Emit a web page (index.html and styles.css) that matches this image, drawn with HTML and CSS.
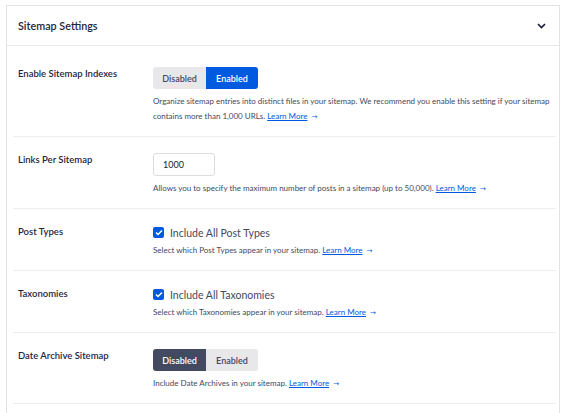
FILE: index.html
```html
<!DOCTYPE html>
<html lang="en">
<head>
    <meta charset="UTF-8">
    <title>Sitemap Settings</title>
    <link rel="stylesheet" href="styles.css">
</head>
<body>
    <div class="card">
        <div class="card-header">
            <h2>Sitemap Settings</h2>
            <svg class="chevron" width="9" height="6" viewBox="0 0 9 6"><path d="M1 1l3.5 3.5L8 1" fill="none" stroke="#141b38" stroke-width="1.6"/></svg>
        </div>
        <div class="card-body">
            <div class="setting">
                <div class="label">Enable Sitemap Indexes</div>
                <div class="control">
                    <div class="toggle">
                        <button class="off">Disabled</button>
                        <button class="on">Enabled</button>
                    </div>
                    <p class="desc">Organize sitemap entries into distinct files in your sitemap. We recommend you enable this setting if your sitemap contains more than 1,000 URLs. <a href="#">Learn More</a><span class="arrow">→</span></p>
                </div>
            </div>
            <div class="setting">
                <div class="label">Links Per Sitemap</div>
                <div class="control">
                    <input class="num" type="text" value="1000">
                    <p class="desc">Allows you to specify the maximum number of posts in a sitemap (up to 50,000). <a href="#">Learn More</a><span class="arrow">→</span></p>
                </div>
            </div>
            <div class="setting">
                <div class="label">Post Types</div>
                <div class="control">
                    <label class="check"><span class="box"><svg width="8" height="7" viewBox="0 0 8 7"><path d="M1 3.5l2 2L7 1.5" fill="none" stroke="#fff" stroke-width="1.5"/></svg></span>Include All Post Types</label>
                    <p class="desc tight">Select which Post Types appear in your sitemap. <a href="#">Learn More</a><span class="arrow">→</span></p>
                </div>
            </div>
            <div class="setting">
                <div class="label">Taxonomies</div>
                <div class="control">
                    <label class="check"><span class="box"><svg width="8" height="7" viewBox="0 0 8 7"><path d="M1 3.5l2 2L7 1.5" fill="none" stroke="#fff" stroke-width="1.5"/></svg></span>Include All Taxonomies</label>
                    <p class="desc tight">Select which Taxonomies appear in your sitemap. <a href="#">Learn More</a><span class="arrow">→</span></p>
                </div>
            </div>
            <div class="setting">
                <div class="label">Date Archive Sitemap</div>
                <div class="control">
                    <div class="toggle">
                        <button class="on dark">Disabled</button>
                        <button class="off">Enabled</button>
                    </div>
                    <p class="desc">Include Date Archives in your sitemap. <a href="#">Learn More</a><span class="arrow">→</span></p>
                </div>
            </div>
        </div>
    </div>
</body>
</html>
```

FILE: styles.css
```css
body {
    margin: 0;
    padding: 5px 1px 0 6px;
    background: #fff;
    font-family: 'Lato', 'Open Sans', sans-serif;
    color: #141b38;
}
.card {
    border: 1px solid #e3e3e3;
    border-bottom: none;
    background: #fff;
    height: 420px;
}
.card-header {
    height: 39px;
    border-bottom: 1px solid #e8e8eb;
    display: flex;
    align-items: center;
    justify-content: space-between;
    padding: 0 13px 0 11px;
}
.card-header h2 {
    margin: 0;
    font-size: 10.8px;
    font-weight: 600;
    color: #1f2540;
}
.chevron {
    display: block;
}
.card-body {
    padding: 5px 3px 0 6px;
}
.setting {
    display: flex;
    padding: 16px 0 12px 5px;
    border-bottom: 1px solid #eeeeee;
}
.setting .label {
    width: 135px;
    flex-shrink: 0;
    font-size: 9.5px;
    font-weight: 600;
    line-height: 13px;
    color: #1f2540;
}
.control {
    flex: 1;
}
.toggle {
    display: flex;
    height: 22px;
}
.toggle button {
    border: none;
    margin: 0;
    font-family: inherit;
    font-size: 9px;
    font-weight: 600;
    padding: 0;
    cursor: pointer;
}
.toggle button:first-child {
    border-radius: 3px 0 0 3px;
    width: 53px;
}
.toggle button:last-child {
    border-radius: 0 3px 3px 0;
    width: 52px;
}
.toggle .off {
    background: #e8e8eb;
    color: #434960;
}
.toggle .on {
    background: #005ae0;
    color: #fff;
}
.toggle .on.dark {
    background: #434960;
}
.desc {
    margin: 5px 0 0;
    font-size: 8px;
    line-height: 15px;
    color: #434960;
}
.desc.tight {
    margin-top: 3px;
}
.desc a {
    color: #005ae0;
}
.arrow {
    display: inline-block;
    margin-left: 4px;
    font-family: 'DejaVu Sans', sans-serif;
    font-size: 7px;
    line-height: 10px;
    color: #005ae0;
}
.num {
    display: block;
    box-sizing: border-box;
    width: 62px;
    height: 23px;
    border: 1px solid #dcdde1;
    border-radius: 3px;
    padding: 0 9px;
    font-family: inherit;
    font-size: 9px;
    color: #141b38;
}
.check {
    display: flex;
    align-items: center;
    height: 15px;
    font-size: 10.5px;
    color: #434960;
}
.box {
    width: 11px;
    height: 11px;
    border-radius: 2px;
    background: #005ae0;
    display: flex;
    align-items: center;
    justify-content: center;
    margin-right: 6px;
}
```
